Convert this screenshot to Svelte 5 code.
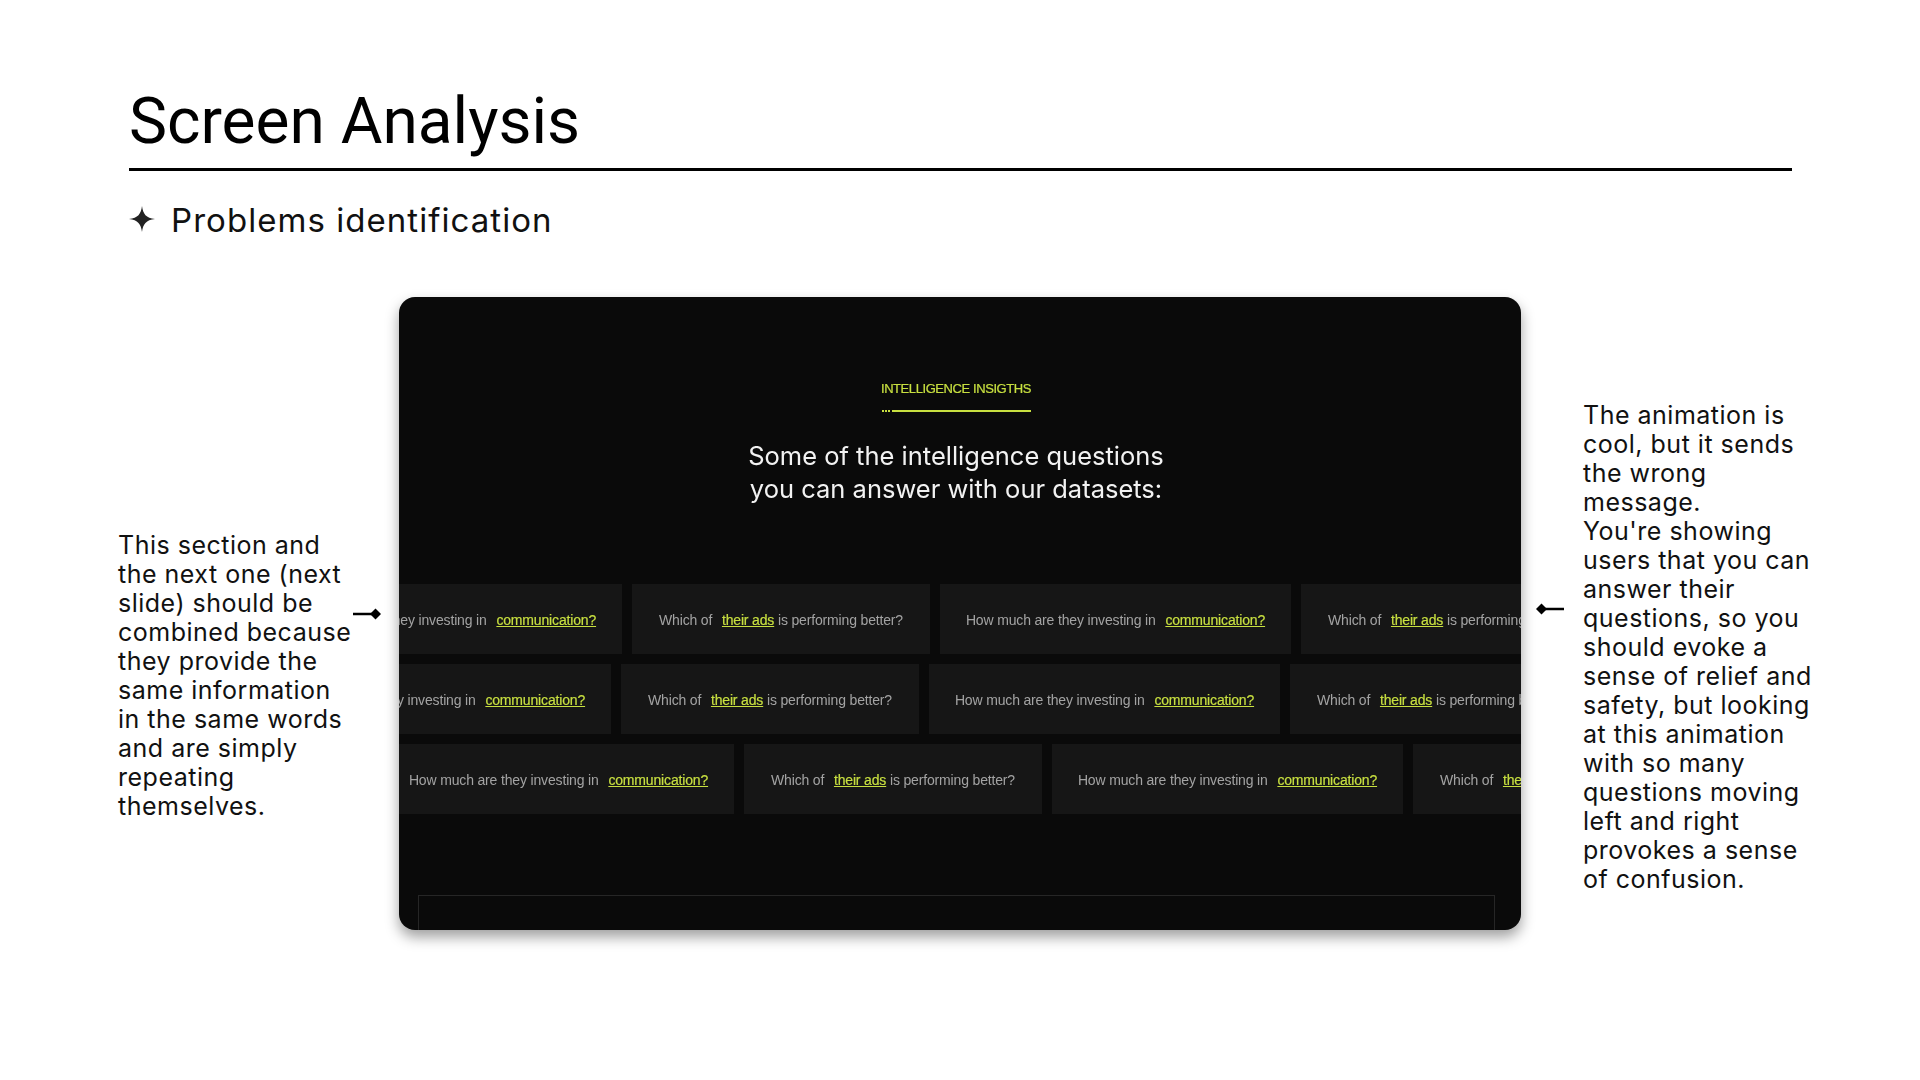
<script>
  const rows = [
    { offset: -128 },
    { offset: -139 },
    { offset: -16 },
  ];
  const cards = ["how", "which", "how", "which"];

  const leftNote = [
    "This section and",
    "the next one (next",
    "slide) should be",
    "combined because",
    "they provide the",
    "same information",
    "in the same words",
    "and are simply",
    "repeating",
    "themselves.",
  ];

  const rightNote = [
    "The animation is",
    "cool, but it sends",
    "the wrong",
    "message.",
    "You're showing",
    "users that you can",
    "answer their",
    "questions, so you",
    "should evoke a",
    "sense of relief and",
    "safety, but looking",
    "at this animation",
    "with so many",
    "questions moving",
    "left and right",
    "provokes a sense",
    "of confusion.",
  ];
</script>

<div class="slide">
  <header class="header">
    <h1>Screen Analysis</h1>
    <div class="subtitle">
      <svg class="star" width="26" height="26" viewBox="0 0 26 26">
        <path d="M13 0 C14 8 17 12 26 13 C17 14 14 18 13 26 C12 18 9 14 0 13 C9 12 12 8 13 0 Z" fill="#222" />
      </svg>
      <span>Problems identification</span>
    </div>
  </header>

  <main class="content">
    <div class="note note-left">
      {#each leftNote as line}
        <div>{line}</div>
      {/each}
    </div>

    <svg class="arrow arrow-left" width="28" height="12" viewBox="0 0 28 12">
      <path d="M0 6 H20" stroke="#000" stroke-width="2.5" />
      <path d="M22.5 0.5 L28 6 L22.5 11.5 L17 6 Z" fill="#000" />
    </svg>

    <section class="screen">
      <div class="intro">
        <div class="eyebrow">INTELLIGENCE INSIGTHS</div>
        <div class="eyebrow-line">
          <span class="dots"></span>
          <span class="line"></span>
        </div>
        <h2>Some of the intelligence questions<br />you can answer with our datasets:</h2>
      </div>

      <div class="rows">
        {#each rows as row}
          <div class="row" style="margin-left: {row.offset}px">
            {#each cards as card}
              {#if card === "how"}
                <div class="card card-how">
                  <span>How much are they investing in <a href="#top">communication?</a></span>
                </div>
              {:else}
                <div class="card card-which">
                  <span>Which of <a href="#top">their ads</a> is performing better?</span>
                </div>
              {/if}
            {/each}
          </div>
        {/each}
      </div>

      <div class="next-box"></div>
    </section>

    <svg class="arrow arrow-right" width="28" height="12" viewBox="0 0 28 12">
      <path d="M8 6 H28" stroke="#000" stroke-width="2.5" />
      <path d="M5.5 0.5 L11 6 L5.5 11.5 L0 6 Z" fill="#000" />
    </svg>

    <div class="note note-right">
      {#each rightNote as line}
        <div>{line}</div>
      {/each}
    </div>
  </main>
</div>

<style>
  :global(body) {
    margin: 0;
    background: #fff;
  }

  .slide {
    width: 1920px;
    height: 1080px;
    overflow: hidden;
    background: #fff;
    color: #000;
  }

  .header {
    padding: 83px 128px 0 129px;
  }

  h1 {
    margin: 0;
    padding-bottom: 7px;
    border-bottom: 3px solid #000;
    font-family: Roboto, sans-serif;
    font-size: 64px;
    font-weight: 400;
    line-height: 78px;
  }

  .subtitle {
    display: flex;
    align-items: center;
    gap: 16px;
    margin-top: 29px;
    font-family: Inter, sans-serif;
    font-size: 33px;
    letter-spacing: 1.05px;
    line-height: 40px;
    color: #111;
  }

  .star {
    flex: none;
    margin-top: -2px;
  }

  .content {
    display: flex;
    align-items: flex-start;
    padding: 57px 0 0 118px;
  }

  .note {
    flex: none;
    font-family: Inter, sans-serif;
    font-size: 25px;
    letter-spacing: 0.5px;
    line-height: 29px;
    white-space: nowrap;
    color: #111;
  }

  .note-left {
    width: 235px;
    margin-top: 234px;
  }

  .note-right {
    margin-top: 104px;
  }

  .arrow {
    flex: none;
  }

  .arrow-left {
    margin: 311px 18px 0 0;
  }

  .arrow-right {
    margin: 306px 19px 0 15px;
  }

  .screen {
    flex: none;
    display: flex;
    flex-direction: column;
    width: 1122px;
    height: 633px;
    overflow: hidden;
    background: #0a0a0a;
    border-radius: 16px;
    box-shadow: 0 7px 14px rgba(0, 0, 0, 0.38);
    font-family: "Liberation Sans", sans-serif;
  }

  .intro {
    display: flex;
    flex-direction: column;
    align-items: center;
    padding: 84px 8px 0 0;
    filter: blur(0.3px);
  }

  .eyebrow {
    font-size: 13px;
    line-height: 16px;
    letter-spacing: -0.42px;
    color: #c8e040;
    -webkit-text-stroke: 0.2px #c8e040;
  }

  .eyebrow-line {
    display: flex;
    gap: 1px;
    width: 149px;
    margin-top: 13px;
  }

  .dots {
    width: 9px;
    height: 2px;
    background: repeating-linear-gradient(90deg, #c8e040 0 2px, transparent 2px 3px);
  }

  .line {
    flex: 1;
    height: 2px;
    background: #c8e040;
  }

  h2 {
    margin: 28px 0 0;
    font-family: Inter, sans-serif;
    font-size: 25.5px;
    font-weight: 400;
    line-height: 32.5px;
    text-align: center;
    color: #f2f2f2;
  }

  .rows {
    display: flex;
    flex-direction: column;
    gap: 10px;
    margin-top: 79px;
    filter: blur(0.3px);
  }

  .row {
    display: flex;
    gap: 10px;
  }

  .card {
    flex: none;
    display: flex;
    align-items: center;
    justify-content: center;
    box-sizing: border-box;
    height: 70px;
    padding-top: 1px;
    background: #161616;
    font-size: 14px;
    letter-spacing: -0.16px;
    white-space: nowrap;
    color: #a3a3a3;
  }

  .card-how {
    width: 351px;
  }

  .card-which {
    width: 298px;
  }

  .card a {
    margin-left: 6px;
    color: #c8e040;
    text-decoration: underline;
    -webkit-text-stroke: 0.15px #c8e040;
  }

  .next-box {
    margin: auto 26px 0 19px;
    height: 35px;
    box-sizing: border-box;
    border: 1px solid #262626;
    border-bottom: none;
  }
</style>
